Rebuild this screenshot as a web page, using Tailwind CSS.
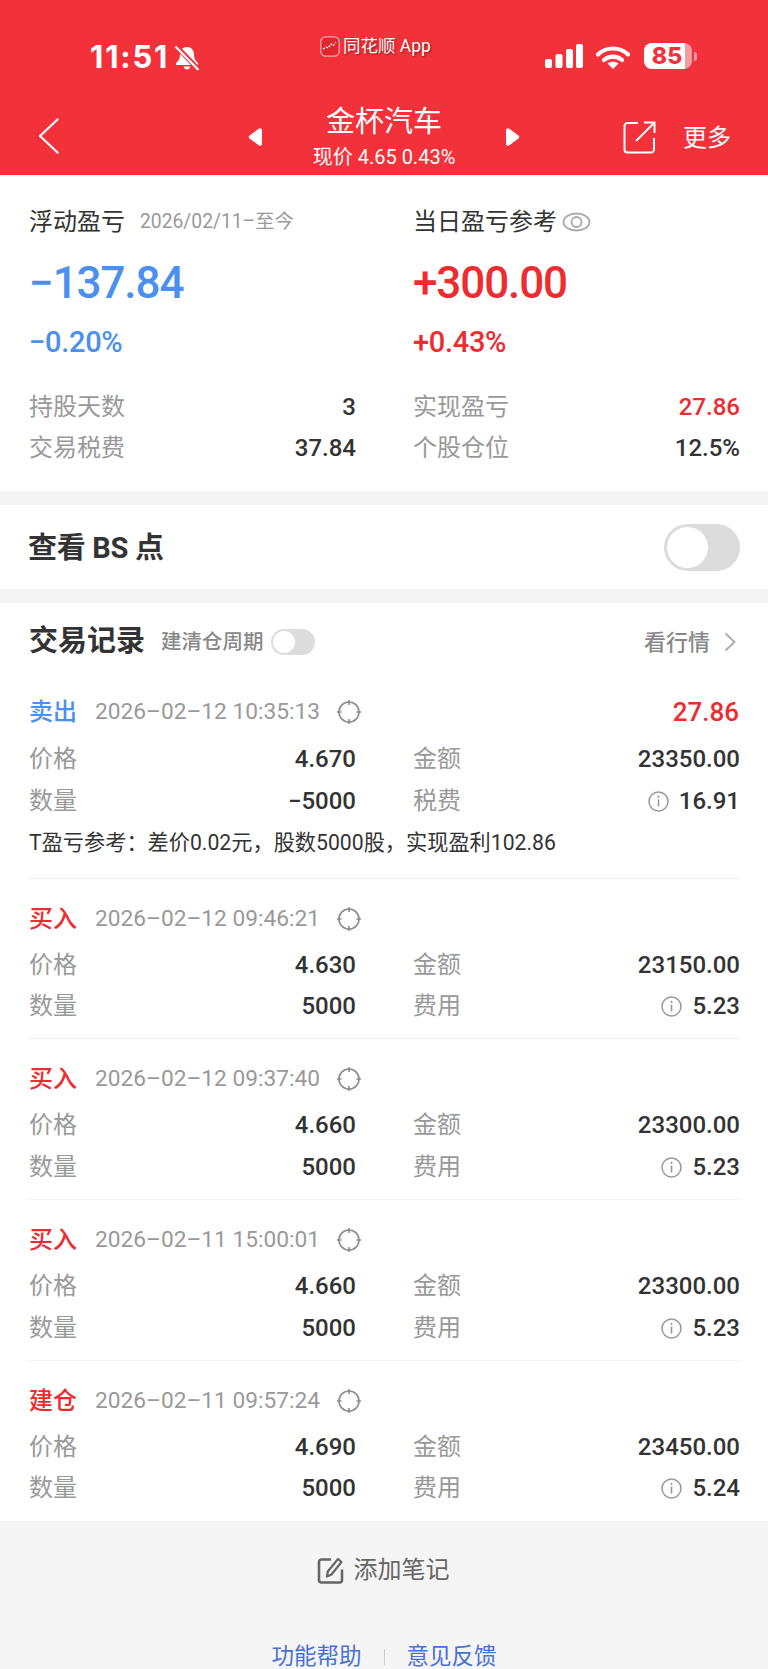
<!DOCTYPE html>
<html lang="zh">
<head>
<meta charset="utf-8">
<title>金杯汽车</title>
<script src="https://cdn.jsdelivr.net/npm/@tailwindcss/browser@4"></script>
</head>
<body class="bg-[#f5f5f5] font-['Roboto','Noto_Sans_CJK_SC',sans-serif] text-[#333]">
<div class="w-[768px] h-[1669px] overflow-hidden bg-[#f5f5f5]">

  <!-- Status bar and navigation -->
  <header class="h-[175px] bg-[#f3313b] text-white">
    <div class="h-[100px] relative flex items-start">
      <div class="flex items-center pl-[90px] pt-[39px]">
        <span class="font-['Inter','Noto_Sans_CJK_SC',sans-serif] font-bold text-[31px] leading-[36px] tracking-[1.8px]">11:51</span>
        <svg class="ml-[5px] mt-[1px]" width="26" height="26" viewBox="0 0 26 26"><path d="M13 2C8.500 2 6 5.500 6 9.500c0 4-1 6-4 8.500v2h22v-2c-3-2.500-4-4.500-4-8.500C20 5.500 17.500 2 13 2z" fill="#fff"/><path d="M9.500 21.500h7c-.5 2-2 3-3.500 3s-3-1-3.500-3z" fill="#fff"/><path d="M2 1l23 24" stroke="#f3313b" stroke-width="5"/><path d="M1.500 1.500l23 23.500" stroke="#fff" stroke-width="2.200"/></svg>
      </div>
      <div class="absolute left-[320px] top-[34px] flex items-center">
        <svg width="20" height="21" viewBox="0 0 20 21"><rect x=".8" y=".8" width="18.400" height="19.400" rx="5" fill="#e0262e" stroke="#f8a5a8" stroke-width="1.300"/><path d="M3 13l3-2 2 1 3-4 2 2 3-4" fill="none" stroke="#fff" stroke-width="1.200" stroke-dasharray="2 1.500"/></svg>
        <span class="ml-[3px] text-[17.500px] leading-[24px] [text-shadow:1px_1px_2px_rgba(80,0,0,0.6)]">同花顺 App</span>
      </div>
      <div class="absolute left-[545px] top-[43px] flex items-start">
        <svg width="38" height="25" viewBox="0 0 38 25"><rect x="0" y="16" width="7" height="9" rx="2" fill="#fff"/><rect x="10.500" y="11" width="7" height="14" rx="2" fill="#fff"/><rect x="21" y="6" width="7" height="19" rx="2" fill="#fff"/><rect x="31" y="1" width="7" height="24" rx="2" fill="#fff"/></svg>
        <svg class="ml-[13px] mt-[3px]" width="34" height="23" viewBox="0 0 34 23"><path d="M2 8.500C10 .5 24 .5 32 8.500" fill="none" stroke="#fff" stroke-width="4.200" stroke-linecap="round"/><path d="M8 14c5-4.500 13-4.500 18 0" fill="none" stroke="#fff" stroke-width="4.200" stroke-linecap="round"/><path d="M17 23l-5.500-5.500c3-2.500 8-2.500 11 0z" fill="#fff"/></svg>
        <div class="ml-[14px] w-[48px] h-[26px] rounded-[8px] bg-white/50 relative overflow-hidden">
          <div class="w-[41px] h-[26px] bg-white flex items-center justify-center">
            <span class="font-['Inter',sans-serif] font-extrabold text-[23px] leading-[26px] text-[#f3313b] ml-[5px]">85</span>
          </div>
        </div>
        <div class="w-[3px] h-[9px] mt-[9px] ml-[2px] rounded-r-full bg-white/50"></div>
      </div>
    </div>
    <div class="h-[75px] relative">
      <svg class="absolute left-[38px] top-[18px]" width="21" height="36" viewBox="0 0 21 36"><path d="M19.500 1.500L2 18l17.500 16.500" fill="none" stroke="#fff" stroke-width="2.200" stroke-linecap="round" stroke-linejoin="round"/></svg>
      <svg class="absolute left-[248px] top-[27px]" width="14" height="20" viewBox="0 0 14 20"><path d="M11 1.500L1.500 8.500a1.800 1.800 0 0 0 0 3L11 18.500a2 2 0 0 0 3-1.500V3a2 2 0 0 0-3-1.500z" fill="#fff"/></svg>
      <div class="absolute left-0 right-0 top-[4px] text-center">
        <div class="text-[29px] leading-[36px]">金杯汽车</div>
        <div class="text-[20px] leading-[24px] mt-[5px]">现价 4.65 0.43%</div>
      </div>
      <svg class="absolute left-[506px] top-[27px]" width="14" height="20" viewBox="0 0 14 20"><path d="M3 1.500L12.500 8.500a1.800 1.800 0 0 1 0 3L3 18.500a2 2 0 0 1-3-1.500V3a2 2 0 0 1 3-1.500z" fill="#fff"/></svg>
      <svg class="absolute left-[623px] top-[21px]" width="33" height="33" viewBox="0 0 33 33"><path d="M15 2H4.500A3 3 0 0 0 1.500 5v23.500a3 3 0 0 0 3 3h23.500a3 3 0 0 0 3-3V17" fill="none" stroke="#fff" stroke-width="2"/><path d="M13 20L31 2M21 1.500h10.500V12" fill="none" stroke="#fff" stroke-width="2"/></svg>
      <span class="absolute left-[683px] top-[23px] text-[24px] leading-[30px]">更多</span>
    </div>
  </header>

  <!-- Position summary -->
  <section class="h-[316px] bg-white px-[29px] pt-[31px]">
    <div class="grid grid-cols-[327px_327px] gap-x-[57px]">
      <div>
        <div class="flex items-center h-[32px]">
          <span class="text-[24px] leading-[32px]">浮动盈亏</span>
          <span class="ml-[15px] text-[19.300px] text-[#999]">2026/02/11–至今</span>
        </div>
        <div class="mt-[23px] h-[44px] text-[44px] leading-[44px] font-medium tracking-[-1.100px] text-[#4a90f0]">−137.84</div>
        <div class="mt-[21px] h-[32px] text-[29px] leading-[32px] font-medium tracking-[-0.300px] text-[#4a90f0]">−0.20%</div>
      </div>
      <div>
        <div class="flex items-center h-[32px]">
          <span class="text-[24px] leading-[32px]">当日盈亏参考</span>
          <svg class="ml-[5px]" width="29" height="22" viewBox="0 0 29 22"><ellipse cx="14.500" cy="11" rx="13" ry="8.500" fill="none" stroke="#a8a8a8" stroke-width="1.800"/><circle cx="14.500" cy="11" r="5" fill="none" stroke="#a8a8a8" stroke-width="1.800"/></svg>
        </div>
        <div class="mt-[23px] h-[44px] text-[44px] leading-[44px] font-medium tracking-[-1.100px] text-[#ee2b2f]">+300.00</div>
        <div class="mt-[21px] h-[32px] text-[29px] leading-[32px] font-medium tracking-[-0.300px] text-[#ee2b2f]">+0.43%</div>
      </div>
    </div>
    <div class="mt-[33px] grid grid-cols-[327px_327px] gap-x-[57px] gap-y-[9px] text-[24px] leading-[32px]">
      <div class="flex justify-between"><span class="text-[#999]">持股天数</span><span class="font-medium">3</span></div>
      <div class="flex justify-between"><span class="text-[#999]">实现盈亏</span><span class="font-medium text-[#ee2b2f]">27.86</span></div>
      <div class="flex justify-between"><span class="text-[#999]">交易税费</span><span class="font-medium">37.84</span></div>
      <div class="flex justify-between"><span class="text-[#999]">个股仓位</span><span class="font-medium">12.5%</span></div>
    </div>
  </section>

  <!-- Buy/sell marker switch -->
  <section class="mt-[14px] h-[84px] bg-white px-[28px] flex items-center justify-between">
    <span class="text-[29px] font-bold tracking-[-0.3px] mt-[3px]">查看 BS 点</span>
    <div class="w-[76px] h-[47px] rounded-full bg-[#dcdcdc] p-[3px]">
      <div class="w-[41px] h-[41px] rounded-full bg-white"></div>
    </div>
  </section>

  <!-- Trade records -->
  <section class="mt-[14px] h-[918px] bg-white px-[29px]">
    <div class="h-[78px] flex items-center">
      <span class="text-[29px] font-bold">交易记录</span>
      <span class="ml-[16px] text-[20.500px] font-medium text-[#888]">建清仓周期</span>
      <div class="ml-[7px] w-[44px] h-[26px] rounded-full bg-[#dcdcdc] p-[2px]"><div class="w-[22px] h-[22px] rounded-full bg-white"></div></div>
      <span class="ml-auto text-[22px] font-medium text-[#888]">看行情</span>
      <svg class="ml-[14px] mr-[3px]" width="12" height="20" viewBox="0 0 12 20"><path d="M1.500 1.500L10.500 10l-9 8.500" fill="none" stroke="#aaa" stroke-width="1.800"/></svg>
    </div>

    <!-- Sell -->
    <article class="h-[183px] mt-[15px] border-b border-[#f0f0f0]">
      <div class="flex items-center h-[32px]">
        <span class="w-[66px] text-[24px] font-medium text-[#4a90f0]">卖出</span>
        <span class="w-[242px] text-[22.700px] text-[#999]">2026–02–12 10:35:13</span>
        <svg width="24" height="26" viewBox="0 0 24 26"><circle cx="12" cy="13" r="10" fill="none" stroke="#8c8c8c" stroke-width="1.600"/><path d="M12 1v5M12 20v5M0 13h4.500M19.500 13H24" stroke="#8c8c8c" stroke-width="1.600"/></svg>
        <span class="ml-auto text-[26px] font-medium text-[#ee2b2f]">27.86</span>
      </div>
      <div class="mt-[15px] grid grid-cols-[327px_327px] gap-x-[57px] gap-y-[10px] text-[24px] leading-[32px]">
        <div class="flex justify-between"><span class="text-[#999]">价格</span><span class="font-medium">4.670</span></div>
        <div class="flex justify-between"><span class="text-[#999]">金额</span><span class="font-medium">23350.00</span></div>
        <div class="flex justify-between"><span class="text-[#999]">数量</span><span class="font-medium">−5000</span></div>
        <div class="flex justify-between"><span class="text-[#999]">税费</span><span class="flex items-center gap-[10px] font-medium"><svg width="21" height="21" viewBox="0 0 21 21"><circle cx="10.500" cy="10.500" r="9.500" fill="none" stroke="#999" stroke-width="1.500"/><path d="M10.500 8.500v7" stroke="#999" stroke-width="1.600"/><circle cx="10.500" cy="5.800" r="1.100" fill="#999"/></svg>16.91</span></div>
      </div>
      <div class="mt-[12px] text-[21.200px] leading-[28px]">T盈亏参考：差价0.02元，股数5000股，实现盈利102.86</div>
    </article>

    <!-- Buy 09:46 -->
    <article class="h-[160px] pt-[24px] border-b border-[#f0f0f0]">
      <div class="flex items-center h-[32px]">
        <span class="w-[66px] text-[24px] font-medium text-[#ee2b2f]">买入</span>
        <span class="w-[242px] text-[22.700px] text-[#999]">2026–02–12 09:46:21</span>
        <svg width="24" height="26" viewBox="0 0 24 26"><circle cx="12" cy="13" r="10" fill="none" stroke="#8c8c8c" stroke-width="1.600"/><path d="M12 1v5M12 20v5M0 13h4.500M19.500 13H24" stroke="#8c8c8c" stroke-width="1.600"/></svg>
      </div>
      <div class="mt-[14px] grid grid-cols-[327px_327px] gap-x-[57px] gap-y-[9px] text-[24px] leading-[32px]">
        <div class="flex justify-between"><span class="text-[#999]">价格</span><span class="font-medium">4.630</span></div>
        <div class="flex justify-between"><span class="text-[#999]">金额</span><span class="font-medium">23150.00</span></div>
        <div class="flex justify-between"><span class="text-[#999]">数量</span><span class="font-medium">5000</span></div>
        <div class="flex justify-between"><span class="text-[#999]">费用</span><span class="flex items-center gap-[10px] font-medium"><svg width="21" height="21" viewBox="0 0 21 21"><circle cx="10.500" cy="10.500" r="9.500" fill="none" stroke="#999" stroke-width="1.500"/><path d="M10.500 8.500v7" stroke="#999" stroke-width="1.600"/><circle cx="10.500" cy="5.800" r="1.100" fill="#999"/></svg>5.23</span></div>
      </div>
    </article>

    <!-- Buy 09:37 -->
    <article class="h-[161px] pt-[24px] border-b border-[#f0f0f0]">
      <div class="flex items-center h-[32px]">
        <span class="w-[66px] text-[24px] font-medium text-[#ee2b2f]">买入</span>
        <span class="w-[242px] text-[22.700px] text-[#999]">2026–02–12 09:37:40</span>
        <svg width="24" height="26" viewBox="0 0 24 26"><circle cx="12" cy="13" r="10" fill="none" stroke="#8c8c8c" stroke-width="1.600"/><path d="M12 1v5M12 20v5M0 13h4.500M19.500 13H24" stroke="#8c8c8c" stroke-width="1.600"/></svg>
      </div>
      <div class="mt-[14px] grid grid-cols-[327px_327px] gap-x-[57px] gap-y-[10px] text-[24px] leading-[32px]">
        <div class="flex justify-between"><span class="text-[#999]">价格</span><span class="font-medium">4.660</span></div>
        <div class="flex justify-between"><span class="text-[#999]">金额</span><span class="font-medium">23300.00</span></div>
        <div class="flex justify-between"><span class="text-[#999]">数量</span><span class="font-medium">5000</span></div>
        <div class="flex justify-between"><span class="text-[#999]">费用</span><span class="flex items-center gap-[10px] font-medium"><svg width="21" height="21" viewBox="0 0 21 21"><circle cx="10.500" cy="10.500" r="9.500" fill="none" stroke="#999" stroke-width="1.500"/><path d="M10.500 8.500v7" stroke="#999" stroke-width="1.600"/><circle cx="10.500" cy="5.800" r="1.100" fill="#999"/></svg>5.23</span></div>
      </div>
    </article>

    <!-- Buy 15:00 -->
    <article class="h-[161px] pt-[24px] border-b border-[#f0f0f0]">
      <div class="flex items-center h-[32px]">
        <span class="w-[66px] text-[24px] font-medium text-[#ee2b2f]">买入</span>
        <span class="w-[242px] text-[22.700px] text-[#999]">2026–02–11 15:00:01</span>
        <svg width="24" height="26" viewBox="0 0 24 26"><circle cx="12" cy="13" r="10" fill="none" stroke="#8c8c8c" stroke-width="1.600"/><path d="M12 1v5M12 20v5M0 13h4.500M19.500 13H24" stroke="#8c8c8c" stroke-width="1.600"/></svg>
      </div>
      <div class="mt-[14px] grid grid-cols-[327px_327px] gap-x-[57px] gap-y-[10px] text-[24px] leading-[32px]">
        <div class="flex justify-between"><span class="text-[#999]">价格</span><span class="font-medium">4.660</span></div>
        <div class="flex justify-between"><span class="text-[#999]">金额</span><span class="font-medium">23300.00</span></div>
        <div class="flex justify-between"><span class="text-[#999]">数量</span><span class="font-medium">5000</span></div>
        <div class="flex justify-between"><span class="text-[#999]">费用</span><span class="flex items-center gap-[10px] font-medium"><svg width="21" height="21" viewBox="0 0 21 21"><circle cx="10.500" cy="10.500" r="9.500" fill="none" stroke="#999" stroke-width="1.500"/><path d="M10.500 8.500v7" stroke="#999" stroke-width="1.600"/><circle cx="10.500" cy="5.800" r="1.100" fill="#999"/></svg>5.23</span></div>
      </div>
    </article>

    <!-- Opening buy -->
    <article class="pt-[24px]">
      <div class="flex items-center h-[32px]">
        <span class="w-[66px] text-[24px] font-medium text-[#ee2b2f]">建仓</span>
        <span class="w-[242px] text-[22.700px] text-[#999]">2026–02–11 09:57:24</span>
        <svg width="24" height="26" viewBox="0 0 24 26"><circle cx="12" cy="13" r="10" fill="none" stroke="#8c8c8c" stroke-width="1.600"/><path d="M12 1v5M12 20v5M0 13h4.500M19.500 13H24" stroke="#8c8c8c" stroke-width="1.600"/></svg>
      </div>
      <div class="mt-[14px] grid grid-cols-[327px_327px] gap-x-[57px] gap-y-[9px] text-[24px] leading-[32px]">
        <div class="flex justify-between"><span class="text-[#999]">价格</span><span class="font-medium">4.690</span></div>
        <div class="flex justify-between"><span class="text-[#999]">金额</span><span class="font-medium">23450.00</span></div>
        <div class="flex justify-between"><span class="text-[#999]">数量</span><span class="font-medium">5000</span></div>
        <div class="flex justify-between"><span class="text-[#999]">费用</span><span class="flex items-center gap-[10px] font-medium"><svg width="21" height="21" viewBox="0 0 21 21"><circle cx="10.500" cy="10.500" r="9.500" fill="none" stroke="#999" stroke-width="1.500"/><path d="M10.500 8.500v7" stroke="#999" stroke-width="1.600"/><circle cx="10.500" cy="5.800" r="1.100" fill="#999"/></svg>5.24</span></div>
      </div>
    </article>
  </section>

  <!-- Note action and footer links -->
  <div class="mt-[33px] flex items-center justify-center h-[32px] text-[24px] text-[#666] pr-[2px]">
    <svg class="mr-[10px]" width="27" height="27" viewBox="0 0 27 27"><path d="M14 2.500H4.500A2.500 2.500 0 0 0 2 5v18a2.500 2.500 0 0 0 2.500 2.500h18A2.500 2.500 0 0 0 25 23V12.500" fill="none" stroke="#666" stroke-width="2.600"/><path d="M21 2l3.500 3-10 12.500-4.500 2 .8-5z" fill="none" stroke="#666" stroke-width="2.200" stroke-linejoin="round"/></svg>
    <span>添加笔记</span>
  </div>
  <div class="mt-[55px] flex items-center justify-center h-[32px] text-[22.500px] text-[#4a70d4]">
    <span>功能帮助</span>
    <span class="w-px h-[16px] bg-[#ccc] mx-[22px]"></span>
    <span>意见反馈</span>
  </div>
</div>
</body>
</html>
